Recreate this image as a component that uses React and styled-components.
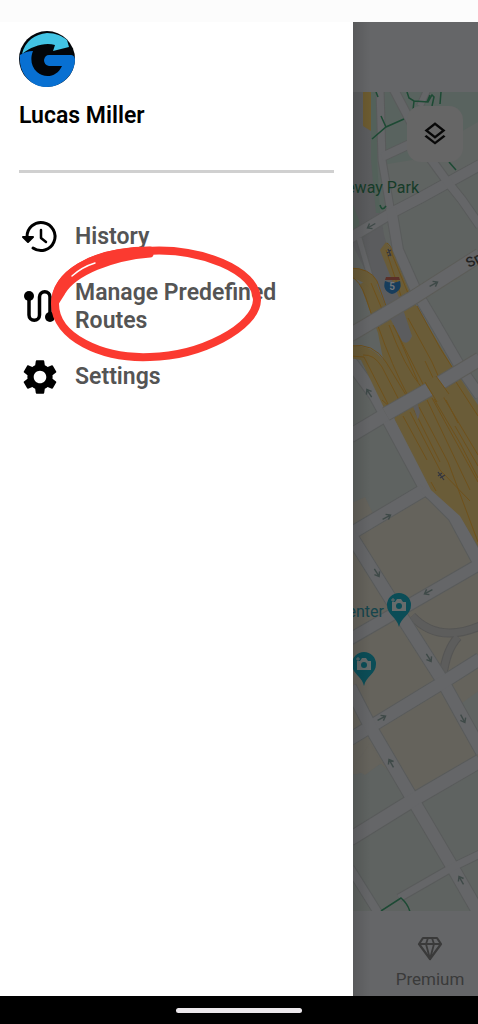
import styled, { createGlobalStyle } from 'styled-components';
import { MdSettings, MdOutlineLayers } from 'react-icons/md';

const GlobalStyle = createGlobalStyle`
  * {
    box-sizing: border-box;
  }

  body {
    margin: 0;
    background: #000;
    font-family: Roboto, sans-serif;
  }
`;

const Screen = styled.div`
  position: relative;
  display: flex;
  flex-direction: column;
  min-height: 100vh;
`;

const StatusBar = styled.div`
  height: 22px;
  background: #fcfcfc;
`;

const Content = styled.div`
  flex: 1;
  display: grid;
  grid-template-columns: 353fr 125fr;
`;

const Drawer = styled.aside`
  display: flex;
  flex-direction: column;
  padding: 9px 19px;
  background: #fff;
`;

const Avatar = styled.svg`
  display: block;
  width: 56px;
  height: 56px;
`;

const UserName = styled.h1`
  margin: 15px 0 0;
  font-size: 23px;
  font-weight: 600;
  line-height: 28px;
  color: #000;
`;

const Divider = styled.hr`
  width: 100%;
  height: 3px;
  margin: 40px 0 43px;
  border: none;
  background: #d0d0d0;
`;

const Menu = styled.nav`
  position: relative;
  display: flex;
  flex-direction: column;
  gap: 21px;
`;

const MenuItem = styled.button`
  display: flex;
  align-items: center;
  gap: 14px;
  min-height: 42px;
  padding: 0;
  border: none;
  background: none;
  font-family: inherit;
  font-size: 23px;
  font-weight: 600;
  line-height: 28px;
  text-align: left;
  color: #545454;
  cursor: pointer;

  svg {
    flex: none;
    width: 42px;
    height: 42px;
    color: #000;
  }
`;

const Highlight = styled.svg`
  position: absolute;
  top: 30px;
  left: 30px;
  width: 214px;
  height: 118px;
  pointer-events: none;
`;

const MapPane = styled.main`
  position: relative;
  display: flex;
  flex-direction: column;
  min-width: 0;
  overflow: hidden;
  background: #656668;

  &::after {
    content: '';
    position: absolute;
    inset: 0 auto 0 0;
    width: 18px;
    background: linear-gradient(to right, rgba(0, 0, 0, 0.12), transparent);
    pointer-events: none;
  }
`;

const TopBar = styled.div`
  height: 70px;
`;

const MapArea = styled.div`
  position: relative;
  flex: 1;
  display: flex;
`;

const MapDrawing = styled.svg`
  flex: 1;
  min-width: 0;
  height: 819px;
  min-height: 100%;
`;

const LayersButton = styled.button`
  position: absolute;
  top: 14px;
  right: 15px;
  display: flex;
  align-items: center;
  justify-content: center;
  width: 56px;
  height: 56px;
  padding: 0;
  border: none;
  border-radius: 14px;
  background: #666666;
  font-size: 28px;
  color: #080808;
  cursor: pointer;
`;

const BottomTab = styled.button`
  display: flex;
  flex-direction: column;
  align-items: center;
  gap: 8px;
  height: 85px;
  padding: 24px 0 0 29px;
  border: none;
  background: none;
  font-family: inherit;
  font-size: 17px;
  line-height: 20px;
  color: #3a3a3a;
  cursor: pointer;

  svg {
    width: 26px;
    height: 26px;
  }
`;

const HomeBar = styled.div`
  display: flex;
  align-items: center;
  justify-content: center;
  height: 28px;
  background: #000;
`;

const HomeHandle = styled.div`
  width: 126px;
  height: 5px;
  border-radius: 3px;
  background: #ece8ec;
`;

const roads = [
  { d: 'M393 88L414 128', w: 8 },
  { d: 'M428 88L420 106', w: 6 },
  { d: 'M380 88L382 160L391 213', w: 7 },
  { d: 'M382 157L410 144', w: 8 },
  { d: 'M350 238L395 211L420 198L480 165', w: 10 },
  { d: 'M430 158L446 180L462 200L480 226', w: 8 },
  { d: 'M391 208L398 250L417 293L436 325L462 370L480 396', w: 10 },
  { d: 'M359 238L374 290', w: 5 },
  { d: 'M350 361L375 395L425 488L432 494', w: 12 },
  { d: 'M350 436L390 412', w: 13 },
  { d: 'M350 534L424 490', w: 12 },
  { d: 'M425 487L454 516L482 568', w: 12 },
  { d: 'M350 534L400 614L442 680L482 752', w: 12 },
  { d: 'M350 639L480 564', w: 11 },
  { d: 'M350 739L442 683L480 659', w: 12 },
  { d: 'M350 687L371 728L413 800L453 868L484 922', w: 12 },
  { d: 'M350 839L413 800L480 761', w: 13 },
  { d: 'M399 898L453 867L480 854', w: 7 },
  { d: 'M350 868L380 916', w: 8 },
];

const crossings = ['M350 335L414 297L480 255', 'M386 414L430 389L480 359'];

const arrows = [
  { x: 371, y: 226, r: 150 },
  { x: 434, y: 284, r: -28 },
  { x: 369, y: 393, r: -122 },
  { x: 387, y: 517, r: -28 },
  { x: 377, y: 573, r: 58 },
  { x: 428, y: 592, r: 152 },
  { x: 429, y: 658, r: 58 },
  { x: 382, y: 718, r: -28 },
  { x: 463, y: 719, r: 62 },
  { x: 391, y: 763, r: -120 },
  { x: 461, y: 880, r: -120 },
];

function Pin({ x, y }) {
  return (
    <g transform={`translate(${x} ${y})`}>
      <path d="M0 22C-2 12-12 10-12 0A12 12 0 0 1 12 0C12 10 2 12 0 22Z" fill="#0b4d57" />
      <path d="M-7-3h3l2-3h4l2 3h3v9H-7Z" fill="#666b6b" />
      <circle cy="1" r="3" fill="#0b4d57" />
      <path d="M-6-7v4M-8-5h4" stroke="#666b6b" />
    </g>
  );
}

function CityMap() {
  return (
    <MapDrawing viewBox="353 92 125 819" preserveAspectRatio="xMidYMid slice" role="img" aria-label="Map">
      <rect x="300" y="0" width="600" height="1000" fill="#5f6361" />
      <path d="M350 88H480V160L450 175L380 215H350Z" fill="#59635f" />
      <path d="M412 160L478 122V165L390 213L382 165Z" fill="#606462" />
      <path d="M350 88H374L377 190L384 235L412 330Q412 345 402 343L350 240Z" fill="#5b5c5e" />
      <path d="M371 88H378L377 160L380 213L376 213L371 160Z" fill="#53615a" />
      <path d="M353 205L359 220L360 232L353 235Z" fill="#53615a" />
      <path d="M350 504L365 497L376 520L350 534V860L355 775L381 764L413 794L482 756V558L452 515L425 495L360 536L350 550Z" fill="#65635c" />
      <path d="M353 774L362 775L381 764L410 798L353 834Z" fill="#5f6361" />
      <path d="M353 768L370 743L381 763L365 775Z" fill="#65635c" />
      <path d="M459 705L480 690V742Z" fill="#606462" />
      <path d="M363 92H371V131L363 126Z" fill="#6c5b30" />

      <path d="M412 616Q438 644 480 626M458 637Q446 650 443 676" fill="none" stroke="#555554" strokeWidth="9" />
      <path d="M412 616Q438 644 480 626M458 637Q446 650 443 676" fill="none" stroke="#5d5d5c" strokeWidth="7" />

      <g fill="none" stroke="#595b5b" strokeLinejoin="round">
        {roads.map((road) => (
          <path key={road.d} d={road.d} strokeWidth={road.w + 2} />
        ))}
      </g>
      <g fill="none" stroke="#656668" strokeLinejoin="round">
        {roads.map((road) => (
          <path key={road.d} d={road.d} strokeWidth={road.w} />
        ))}
      </g>

      <g fill="#6a5c38" stroke="#6f511b" strokeWidth="1">
        <path
          stroke="none"
          d="M360 284L374 278L390 318L402 341Q408 346 412 336L400 300L380 250L386 242L393 252L413 300L452 366L480 408V550L460 516L431 490L395 420L378 333Z"
        />
        <path stroke="none" d="M350 346Q373 344 386 364L410 402L385 410L361 360L350 358Z" />
        <path stroke="none" d="M350 268Q370 268 378 283L372 290Q362 279 350 278Z" />
        <path
          fill="none"
          d="M350 268Q370 268 377 281L386 306M350 276Q360 280 366 298L376 328M371 283L384 314M387 243Q392 246 392 254L412 303M386 250L405 308M378 326Q392 366 408 396M389 325Q404 366 422 388M393 325L425 388M398 335L418 382M417 306L440 348L452 367M408 318L432 362L440 380M425 361L436 384"
        />
        <path
          fill="none"
          d="M350 346Q373 342 386 362L409 400M363 355Q374 354 382 367L400 402M350 356L364 357L390 408M382 400L390 407M456 382L478 416M438 388L478 455M427 400L470 490M432 398L478 482M434 399L460 443L478 478M446 400L458 423M455 426L478 466M410 412L440 470L470 501M403 416L427 460M414 410L440 462M419 407L448 462L478 542M431 482L436 491"
        />
      </g>
      <path d="M412 404L418 420L420 412L417 402" fill="#5d5c5b" />

      <g fill="none">
        {crossings.map((d) => (
          <path key={d} d={d} stroke="#5c5c58" strokeWidth="15" />
        ))}
        {crossings.map((d) => (
          <path key={d} d={d} stroke="#656668" strokeWidth="13" />
        ))}
      </g>
      <path d="M424 382L436 376L449 394L437 402Z" fill="#6a5c38" />
      <path d="M425 382L437 402M436 376L449 394" stroke="#6f511b" />

      <g fill="none" stroke="#1d4a34" strokeWidth="1.5">
        <path d="M372 139L386 127L404 119M386 127L381 116M376 92L378 97M407 92L409 98L414 101L428 102L432 95L434 97L432 106M414 101L413 110M441 92L440 104M427 102L430 95M449 162L456 170" />
        <path d="M380 205Q382 212 386 206M381 911L401 898Q408 904 410 912" />
      </g>

      <g fill="none" stroke="#3f4a48" strokeWidth="1.4">
        {arrows.map((arrow) => (
          <path
            key={`${arrow.x}-${arrow.y}`}
            transform={`translate(${arrow.x} ${arrow.y}) rotate(${arrow.r})`}
            d="M-5 0H4M0-3L4 0L0 3"
          />
        ))}
      </g>
      <path
        d="M388 249L391 256M387 253L391 250M388 256L391 254M438 472L444 480M440 478L445 475M438 476L442 473"
        fill="none"
        stroke="#343640"
        strokeWidth="1.2"
      />

      <path d="M385 281Q392 284 400 281Q403 291 392 294Q382 291 385 281Z" fill="#173d5c" />
      <path d="M386 277H399L400 280H385Z" fill="#5b3028" />
      <text x="392" y="290" fontSize="10" fontWeight="700" textAnchor="middle" fill="#70767a">
        5
      </text>

      <Pin x={399} y={605} />
      <Pin x={364} y={664} />

      <g fontSize="16">
        <text x="419" y="193" textAnchor="end" fill="#173c29">
          eway Park
        </text>
        <text x="384" y="617" textAnchor="end" fill="#16454d">
          enter
        </text>
        <text transform="translate(469 268) rotate(-28)" fontSize="14" fontWeight="500" fill="#222">
          Sp
        </text>
      </g>
    </MapDrawing>
  );
}

function HistoryIcon() {
  return (
    <svg viewBox="0 0 42 42" fill="none" stroke="currentColor" strokeWidth="3" strokeLinecap="round" strokeLinejoin="round">
      <path d="M8 21A14 14 0 1 1 14 32" />
      <path d="M22 14V22L27 26" strokeWidth="2.500" />
      <path d="M4 21H14L9 26Z" fill="currentColor" strokeWidth="2" />
    </svg>
  );
}

function RouteIcon() {
  return (
    <svg viewBox="0 0 42 42" fill="none" stroke="currentColor" strokeWidth="3.500">
      <path d="M10 11V29A5 5 0 0 0 20.500 29V11A5 5 0 0 1 31 11V31" />
      <circle cx="10" cy="10" r="5" fill="currentColor" stroke="none" />
      <circle cx="31" cy="31" r="5" fill="currentColor" stroke="none" />
    </svg>
  );
}

function GemIcon() {
  return (
    <svg viewBox="0 0 26 26" fill="none" stroke="currentColor" strokeWidth="2.200" strokeLinejoin="round">
      <path d="M6 3H20L24 9L13 24L2 9Z" />
      <path d="M2 9H24M11 3L9 9L13 24L17 9L15 3" strokeWidth="1.800" />
    </svg>
  );
}

function App() {
  return (
    <>
      <GlobalStyle />
      <Screen>
        <StatusBar />
        <Content>
          <Drawer>
            <Avatar viewBox="0 0 56 56" role="img" aria-label="Profile">
              <circle cx="28" cy="28" r="28" fill="#020509" />
              <path d="M3 23C6 10 16 3 28 2C37 2 43 5 48 9L50 16L34 20L36 14C26 11 13 15 3 23Z" fill="#42c4e5" />
              <path
                d="M1 24Q7 20 14 20C11 27 12 36 18 41C26 48 38 46 43 35H30Q25 34 25 29Q26 24 30 24H52Q55 24 56 28C56 43 43 56 28 56C12 56-1 42 1 24Z"
                fill="#0870d2"
              />
            </Avatar>
            <UserName>Lucas Miller</UserName>
            <Divider />
            <Menu>
              <MenuItem type="button">
                <HistoryIcon />
                History
              </MenuItem>
              <MenuItem type="button">
                <RouteIcon />
                Manage Predefined Routes
              </MenuItem>
              <MenuItem type="button">
                <MdSettings />
                Settings
              </MenuItem>
              <Highlight viewBox="49 246 214 118" fill="none" stroke="#fb3a30" strokeLinecap="round" strokeLinejoin="round">
                <path
                  strokeWidth="8"
                  d="M145 251C200 247 257 270 257 300C256 328 200 356 150 357C102 359 55 337 55 304C55 274 92 252 145 251"
                />
                <path d="M55 303C54 276 90 250 150 250V254C112 257 74 272 62 292Z" fill="#fb3a30" strokeWidth="7" />
                <path stroke="#fff" strokeWidth="1.500" d="M72 276Q82 267 95 263" />
              </Highlight>
            </Menu>
          </Drawer>
          <MapPane>
            <TopBar />
            <MapArea>
              <CityMap />
              <LayersButton type="button" aria-label="Map layers">
                <MdOutlineLayers />
              </LayersButton>
            </MapArea>
            <BottomTab type="button">
              <GemIcon />
              Premium
            </BottomTab>
          </MapPane>
        </Content>
        <HomeBar>
          <HomeHandle />
        </HomeBar>
      </Screen>
    </>
  );
}

export default App;
